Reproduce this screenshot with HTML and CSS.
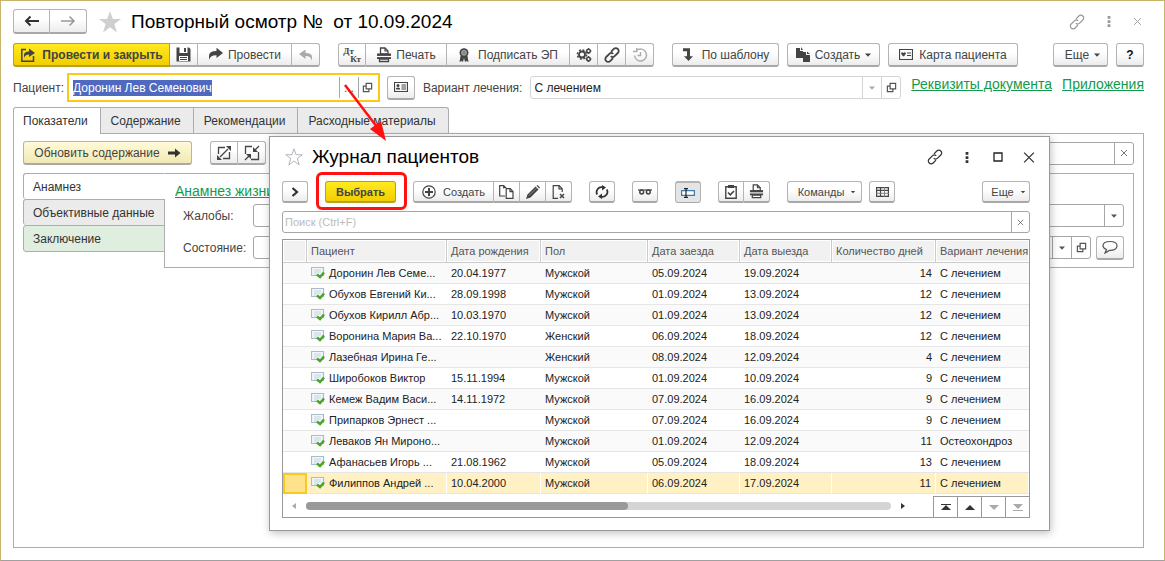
FILE: index.html
```html
<!DOCTYPE html>
<html lang="ru">
<head>
<meta charset="utf-8">
<title>Повторный осмотр</title>
<link rel="stylesheet" href="styles.css">
</head>
<body>
<svg class="defs" aria-hidden="true">
  <symbol id="i-link" viewBox="0 0 16 16"><g fill="none" stroke="currentColor"><path d="M7 4.800 9.800 2a2.700 2.700 0 0 1 4 0 2.700 2.700 0 0 1 0 4L10.600 9.200a2.700 2.700 0 0 1-3.800 0"/><path d="M9 11.200 6.200 14a2.700 2.700 0 0 1-4 0 2.700 2.700 0 0 1 0-4L5.400 6.800a2.700 2.700 0 0 1 3.800 0"/></g></symbol>
  <symbol id="i-print" viewBox="0 0 16 16"><path d="M4.500 1h4.500l3 3v3H4.500z" fill="#fff" stroke="currentColor" stroke-width="1.300"/><path d="M9 1v3h3" fill="none" stroke="currentColor"/><path d="M1 6.500h14V12H1z" fill="currentColor"/><path d="M1 9.500h14" stroke="#fff"/><path d="M3.500 12h9v2.500h-9z" fill="#fff" stroke="currentColor" stroke-width="1.300"/></symbol>
  <symbol id="i-open" viewBox="0 0 12 12"><g fill="none" stroke="currentColor" stroke-width="1.300"><path d="M4.500 1.500h6v6h-6z"/><path d="M4.500 4.500h-3v6h6v-3"/></g></symbol>
  <symbol id="i-down" viewBox="0 0 8 8"><path d="M1 2.500h6L4 5.800z" fill="currentColor"/></symbol>
  <symbol id="i-x" viewBox="0 0 12 12"><path d="M1.500 1.500l9 9M10.500 1.500l-9 9" stroke="currentColor" stroke-width="1.200"/></symbol>
  <symbol id="i-dots" viewBox="0 0 4 12"><path d="M.5 0h3v3h-3zM.5 4.500h3v3h-3zM.5 9h3v3h-3z" fill="currentColor"/></symbol>
  <symbol id="i-star" viewBox="0 0 24 24"><path d="M12 1l2.800 8H23l-6.600 5 2.500 8.500L12 17.300 5.100 22.500 7.600 14 1 9h8.200z"/></symbol>
  <symbol id="i-doc" viewBox="0 0 14 13"><path d="M.5 1.500h12v8h-12z" fill="#f3f7fa" stroke="#a9bccb"/><path d="M3 4h7M3 6h7M3 8h3" stroke="#c3d3de"/><path d="M6 8.500 9 11 13 6.500" fill="none" stroke="#4aa52a" stroke-width="2.600"/></symbol>
</svg>

<main class="window">
  <header class="titlebar">
    <div class="group">
      <button class="btn nav" aria-label="Назад"><svg width="16" height="12" viewBox="0 0 16 12"><path d="M2 6h13M6.500 1.500 2 6l4.500 4.500" fill="none" stroke="#333" stroke-width="2"/></svg></button>
      <button class="btn nav" aria-label="Вперед"><svg width="16" height="12" viewBox="0 0 16 12"><path d="M1 6h13M9.500 1.500 14 6l-4.500 4.500" fill="none" stroke="#999" stroke-width="1.500"/></svg></button>
    </div>
    <svg class="star filled" width="24" height="24"><use href="#i-star"/></svg>
    <h1>Повторный осмотр №&nbsp; от 10.09.2024</h1>
    <div class="window-tools">
      <svg width="16" height="16"><use href="#i-link"/></svg>
      <svg width="4" height="11"><use href="#i-dots"/></svg>
      <svg width="9" height="9"><use href="#i-x"/></svg>
    </div>
  </header>

  <div class="toolbar">
    <div class="group">
      <button class="btn primary save"><svg width="16" height="16" viewBox="0 0 16 16"><path d="M6 2.500H1.800v11.700h11.700V9" fill="none" stroke="#444" stroke-width="1.500"/><path d="M4 11V8q0-3.500 5-3.500V1.500l6 4.500-6 4V7.500Q5 7.500 4 11z" fill="#444"/></svg>Провести и закрыть</button>
      <button class="btn icon28" aria-label="Записать"><svg width="15" height="15" viewBox="0 0 15 15"><path d="M.5.500h3V6h8V.5h1.500L14.500 2v12.500H.5z" fill="#444"/><path d="M8 1h2v4H8z" fill="#444"/><path d="M3 9h9v5H3z" fill="#fff"/><path d="M4 10.500h7M4 12.500h7" stroke="#444"/></svg></button>
      <button class="btn post"><svg width="16" height="16" viewBox="0 0 16 16"><path d="M1 13V9q0-5 7.500-5V.8L15 6l-6.500 5V8.200Q2 8 1 13z" fill="#444"/></svg>Провести</button>
      <button class="btn icon28" aria-label="Отменить проведение"><svg width="16" height="16" viewBox="0 0 16 16"><path d="M14 14v-4q0-4-6.500-4V2.500L1 7l6.500 5V9Q13 9 14 14z" fill="#aaa"/></svg></button>
    </div>
    <div class="group">
      <button class="btn icon28 dtkt" aria-label="Дт/Кт"><span>Дт</span><span>Кт</span></button>
      <button class="btn print"><svg width="16" height="16"><use href="#i-print"/></svg>Печать</button>
      <button class="btn sign"><svg width="12" height="14" viewBox="0 0 12 14"><path d="M2.500 8 1.500 14l2-1 1.500 1 1-4 1 4 1.500-1 2 1L9.500 8z" fill="#444"/><circle cx="6" cy="4.800" r="4.500" fill="#444"/><circle cx="6" cy="4.800" r="2.500" fill="#888" stroke="#bbb" stroke-width=".7"/></svg>Подписать ЭП</button>
      <button class="btn icon28" aria-label="Настройки"><svg width="16" height="16" viewBox="0 0 16 16"><g fill="none" stroke="#444"><circle cx="6" cy="7.500" r="3" stroke-width="1.800"/><circle cx="6" cy="7.500" r="4.600" stroke-width="1.500" stroke-dasharray="2 1.600"/><circle cx="12.500" cy="4" r="1.800" stroke-width="1.500"/><circle cx="12.500" cy="12" r="1.800" stroke-width="1.500"/><path d="M12.500 1v1M12.500 6v1M9.600 4h1M14.500 4h1M12.500 9v1M12.500 14v1M9.600 12h1M14.500 12h1"/></g></svg></button>
      <button class="btn icon28" aria-label="Ссылка"><svg class="bold" width="16" height="16"><use href="#i-link"/></svg></button>
      <button class="btn icon28" aria-label="История"><svg width="16" height="16" viewBox="0 0 16 16"><path d="M2.500 8.500a6 6 0 1 0 2-5M1 4.500h3.800V1M8.500 5v3.500H5.500" fill="none" stroke="#aaa" stroke-width="1.400"/></svg></button>
    </div>
    <button class="btn template"><svg width="12" height="15" viewBox="0 0 12 15"><path d="M1 1.200h7v8h3L6.500 14 2 9.200h3v-5H1z" fill="#444"/></svg>По шаблону</button>
    <button class="btn create"><svg width="16" height="15" viewBox="0 0 16 15"><path d="M1 1h4v3h3v7H1zM6 0l2 3H6zM8 5h3v3h4v7H8z" fill="#444"/><path d="M12 4.500 15 7h-3z" fill="#444"/></svg>Создать<svg class="caret" width="8" height="8"><use href="#i-down"/></svg></button>
    <button class="btn card"><svg width="14" height="11" viewBox="0 0 14 11"><path d="M.5.500h13v10H.5z" fill="none" stroke="#444"/><path d="M2 4q1-1.500 2.500 0 1.500-1.500 2.500 0Q6.500 6 4.500 7.500 2.500 6 2 4z" fill="#444"/><path d="M8 4h4M8 6.500h4" stroke="#444"/></svg>Карта пациента</button>
    <button class="btn more">Еще<svg class="caret" width="8" height="8"><use href="#i-down"/></svg></button>
    <button class="btn icon28 help">?</button>
  </div>

  <div class="fields">
    <label for="patient">Пациент:</label>
    <div class="box patient">
      <input id="patient" value="Доронин Лев Семенович">
      <button aria-label="Выбрать пациента">...</button>
      <button aria-label="Открыть"><svg width="11" height="11"><use href="#i-open"/></svg></button>
    </div>
    <button class="btn icon28 patient-card" aria-label="Карточка"><svg width="14" height="10" viewBox="0 0 14 10"><path d="M.5.500h13v9H.5z" fill="none" stroke="#444"/><circle cx="4" cy="3.500" r="1.500" fill="#444"/><path d="M2 7.500V6.200q2-1.500 4 0v1.300z" fill="#444"/><path d="M7.500 3H12M7.500 5H12M7.500 7H12" stroke="#444"/></svg></button>
    <label for="variant">Вариант лечения:</label>
    <div class="box variant">
      <input id="variant" value="С лечением">
      <button class="dim" aria-label="Список"><svg width="8" height="8"><use href="#i-down"/></svg></button>
      <button aria-label="Открыть"><svg width="11" height="11"><use href="#i-open"/></svg></button>
    </div>
    <a href="#">Реквизиты документа</a>
    <a href="#">Приложения</a>
  </div>

  <nav class="tabs">
    <button class="active">Показатели</button><button>Содержание</button><button>Рекомендации</button><button>Расходные материалы</button>
  </nav>

  <section class="page">
    <div class="page-bar">
      <button class="btn refresh">Обновить содержание<svg width="13" height="10" viewBox="0 0 13 10"><path d="M0 3.500h7V.5L12.500 5 7 9.500v-3H0z" fill="#333"/></svg></button>
      <div class="group">
        <button class="btn icon28" aria-label="Развернуть"><svg width="16" height="16" viewBox="0 0 16 16"><path d="M9 2.500H2.500V9M7 13.500h6.500V7M4 12l8-8" fill="none" stroke="#444" stroke-width="1.300"/><path d="M15 1v5L10 1zM1 15v-5L6 15z" fill="#444"/></svg></button>
        <button class="btn icon28" aria-label="Свернуть"><svg width="16" height="16" viewBox="0 0 16 16"><path d="M8 1.500H1.500V9M7 14.500h7.500V7M1 15l4-4M15 1l-4 4" fill="none" stroke="#444" stroke-width="1.300"/><path d="M9 2v5h5zM7 14V9H2z" fill="#444"/></svg></button>
      </div>
      <div class="box filter"><input aria-label="Поиск"><button aria-label="Очистить"><svg width="8" height="8"><use href="#i-x"/></svg></button></div>
    </div>
    <div class="sheet">
      <nav class="side">
        <button class="active">Анамнез</button><button>Объективные данные</button><button class="green">Заключение</button>
      </nav>
      <div class="sheet-body">
        <a href="#">Анамнез жизни</a>
        <div class="line">
          <label for="complaints">Жалобы:</label>
          <div class="box"><input id="complaints"><button aria-label="Список"><svg width="8" height="8"><use href="#i-down"/></svg></button></div>
        </div>
        <div class="line">
          <label for="state">Состояние:</label>
          <div class="box"><input id="state"><button aria-label="Список"><svg width="8" height="8"><use href="#i-down"/></svg></button><button aria-label="Открыть"><svg width="11" height="11"><use href="#i-open"/></svg></button></div>
          <button class="btn icon28" aria-label="Комментарий"><svg width="16" height="14" viewBox="0 0 16 14"><path d="M4.500 9.500 3 13l4.500-2.600Q15 10.500 15 5.800 15 1.500 8 1.500T1 5.800q0 2.500 3.500 3.700z" fill="none" stroke="#555" stroke-width="1.200"/></svg></button>
        </div>
      </div>
    </div>
  </section>
</main>

<section class="dialog" role="dialog" aria-labelledby="dialog-title">
  <header class="dialog-title">
    <svg class="star" width="18" height="18"><use href="#i-star"/></svg>
    <h2 id="dialog-title">Журнал пациентов</h2>
    <div class="window-tools">
      <svg width="16" height="16"><use href="#i-link"/></svg>
      <svg width="14" height="11"><use href="#i-dots"/></svg>
      <svg width="14" height="10" viewBox="0 0 10 10"><path d="M1 1h8v8H1z" fill="none" stroke="#222" stroke-width="1.300"/></svg>
      <svg width="14" height="13"><use href="#i-x"/></svg>
    </div>
  </header>
  <div class="toolbar small">
    <button class="btn icon26" aria-label="Панель"><svg width="8" height="10" viewBox="0 0 8 10"><path d="M1.500 1 6 5 1.500 9" fill="none" stroke="#333" stroke-width="2.200"/></svg></button>
    <div class="choose"><button class="btn primary">Выбрать</button></div>
    <div class="group">
      <button class="btn add"><svg width="14" height="14" viewBox="0 0 14 14"><circle cx="7" cy="7" r="6.200" fill="none" stroke="#444" stroke-width="1.200"/><path d="M7 3v8M3 7h8" stroke="#444" stroke-width="2"/></svg>Создать</button>
      <button class="btn icon26" aria-label="Копировать"><svg width="15" height="14" viewBox="0 0 15 14"><path d="M6 11H.7V.7h4l2.500 2.500V4M4.700.7v2.800M7.200 3.700h4L14 6.500v6.800H7.200zM11 3.700v3h3" fill="#fff" stroke="#444" stroke-width="1.200"/></svg></button>
      <button class="btn icon26" aria-label="Изменить"><svg width="14" height="14" viewBox="0 0 14 14"><path d="M0 14 1.500 9.500 9.500 1.500 12.500 4.500 4.500 12.500z" fill="#444"/><path d="M10.500.8 11.500 0 14 2.500 13.200 3.500z" fill="#444"/><path d="M3 10.500 10.500 3" stroke="#aaa" stroke-width=".7"/></svg></button>
      <button class="btn icon26" aria-label="Удалить"><svg width="14" height="14" viewBox="0 0 14 14"><path d="M6 13.300H1.200V.7h6l3 3V7M7 .7v3.200h3.200" fill="none" stroke="#444" stroke-width="1.200"/><path d="M8 9l4 4M12 9l-4 4" stroke="#444" stroke-width="1.500"/></svg></button>
    </div>
    <button class="btn icon26" aria-label="Обновить"><svg width="14" height="14" viewBox="0 0 14 14"><path d="M2.200 9.500A5 5 0 0 1 7.500 2.200M11.800 4.500A5 5 0 0 1 6.500 11.800" fill="none" stroke="#333" stroke-width="1.800"/><path d="M7 0l4 2.500L7 5.500zM7 14l-4-2.500L7 8.500z" fill="#333"/></svg></button>
    <button class="btn icon26" aria-label="Просмотр"><svg width="14" height="8" viewBox="0 0 14 8"><path d="M0 2h14" stroke="#444" stroke-width="1.200"/><circle cx="3.700" cy="4" r="1.900" fill="none" stroke="#444" stroke-width="1.500"/><circle cx="10.300" cy="4" r="1.900" fill="none" stroke="#444" stroke-width="1.500"/></svg></button>
    <button class="btn icon26 pressed" aria-label="Поле ввода"><svg width="14" height="10" viewBox="0 0 14 10"><path d="M.6 2.600h12.800v4.800H.6z" fill="#fff" stroke="#3b7cae" stroke-width="1.200"/><path d="M5 0v10M3 .6h4M3 9.400h4" stroke="#222" stroke-width="1.200"/></svg></button>
    <div class="group">
      <button class="btn icon26" aria-label="Проверка"><svg width="12" height="14" viewBox="0 0 12 14"><path d="M.8 1.800h10.400v11.400H.8z" fill="#fff" stroke="#444" stroke-width="1.400"/><path d="M3 0h6v3H3z" fill="#444"/><path d="M3 7.500l2.300 2.300L9 6" fill="none" stroke="#444" stroke-width="1.600"/></svg></button>
      <button class="btn icon26" aria-label="Печать"><svg width="15" height="15"><use href="#i-print"/></svg></button>
    </div>
    <button class="btn commands">Команды<svg class="caret" width="6" height="6"><use href="#i-down"/></svg></button>
    <button class="btn icon26" aria-label="Таблица"><svg width="13" height="10" viewBox="0 0 13 10"><path d="M.6.600h11.800v8.800H.6z" fill="none" stroke="#444" stroke-width="1.200"/><path d="M0 3.300h13M4.500 0v10" stroke="#444" stroke-width="1.200"/><path d="M0 6.300h13M8.500 0v10" stroke="#777" stroke-width=".9"/></svg></button>
    <button class="btn more">Еще<svg class="caret" width="6" height="6"><use href="#i-down"/></svg></button>
  </div>
  <div class="box search"><input placeholder="Поиск (Ctrl+F)" aria-label="Поиск"><button aria-label="Очистить"><svg width="7" height="7"><use href="#i-x"/></svg></button></div>
  <div class="grid">
    <table>
      <colgroup><col class="c-mark"><col class="c-name"><col class="c-birth"><col class="c-sex"><col class="c-date"><col class="c-date"><col class="c-days"><col></colgroup>
      <thead><tr><th></th><th>Пациент</th><th>Дата рождения</th><th>Пол</th><th>Дата заезда</th><th>Дата выезда</th><th>Количество дней</th><th>Вариант лечения</th></tr></thead>
      <tbody>
        <tr><td></td><td><svg width="14" height="13"><use href="#i-doc"/></svg>Доронин Лев Семе...</td><td>20.04.1977</td><td>Мужской</td><td>05.09.2024</td><td>19.09.2024</td><td class="num">14</td><td>С лечением</td></tr>
        <tr><td></td><td><svg width="14" height="13"><use href="#i-doc"/></svg>Обухов Евгений Ки...</td><td>28.09.1998</td><td>Мужской</td><td>01.09.2024</td><td>13.09.2024</td><td class="num">12</td><td>С лечением</td></tr>
        <tr><td></td><td><svg width="14" height="13"><use href="#i-doc"/></svg>Обухов Кирилл Абр...</td><td>10.03.1970</td><td>Мужской</td><td>01.09.2024</td><td>13.09.2024</td><td class="num">12</td><td>С лечением</td></tr>
        <tr><td></td><td><svg width="14" height="13"><use href="#i-doc"/></svg>Воронина Мария Ва...</td><td>22.10.1970</td><td>Женский</td><td>06.09.2024</td><td>18.09.2024</td><td class="num">12</td><td>С лечением</td></tr>
        <tr><td></td><td><svg width="14" height="13"><use href="#i-doc"/></svg>Лазебная Ирина Ге...</td><td></td><td>Женский</td><td>08.09.2024</td><td>12.09.2024</td><td class="num">4</td><td>С лечением</td></tr>
        <tr><td></td><td><svg width="14" height="13"><use href="#i-doc"/></svg>Широбоков Виктор</td><td>15.11.1994</td><td>Мужской</td><td>01.09.2024</td><td>10.09.2024</td><td class="num">9</td><td>С лечением</td></tr>
        <tr><td></td><td><svg width="14" height="13"><use href="#i-doc"/></svg>Кемеж Вадим Васи...</td><td>14.11.1972</td><td>Мужской</td><td>07.09.2024</td><td>16.09.2024</td><td class="num">9</td><td>С лечением</td></tr>
        <tr><td></td><td><svg width="14" height="13"><use href="#i-doc"/></svg>Припарков Эрнест ...</td><td></td><td>Мужской</td><td>07.09.2024</td><td>16.09.2024</td><td class="num">9</td><td>С лечением</td></tr>
        <tr><td></td><td><svg width="14" height="13"><use href="#i-doc"/></svg>Леваков Ян Мироно...</td><td></td><td>Мужской</td><td>01.09.2024</td><td>12.09.2024</td><td class="num">11</td><td>Остеохондроз</td></tr>
        <tr><td></td><td><svg width="14" height="13"><use href="#i-doc"/></svg>Афанасьев Игорь ...</td><td>21.08.1962</td><td>Мужской</td><td>05.09.2024</td><td>18.09.2024</td><td class="num">13</td><td>С лечением</td></tr>
        <tr class="current"><td></td><td><svg width="14" height="13"><use href="#i-doc"/></svg>Филиппов Андрей ...</td><td>10.04.2000</td><td>Мужской</td><td>06.09.2024</td><td>17.09.2024</td><td class="num">11</td><td>С лечением</td></tr>
      </tbody>
    </table>
    <div class="grid-foot">
      <svg width="4" height="6" viewBox="0 0 4 6"><path d="M4 0v6L0 3z" fill="#aaa"/></svg>
      <div class="track"><div class="thumb"></div></div>
      <svg width="4" height="6" viewBox="0 0 4 6"><path d="M0 0v6l4-3z" fill="#333"/></svg>
      <div class="jump">
        <button aria-label="В начало"><svg width="10" height="7" viewBox="0 0 10 7"><path d="M0 0h10v1H0zM5 1l5 5H0z" fill="#333"/></svg></button>
        <button aria-label="Вверх"><svg width="10" height="7" viewBox="0 0 10 7"><path d="M5 1l5 5H0z" fill="#333"/></svg></button>
        <button aria-label="Вниз"><svg width="10" height="7" viewBox="0 0 10 7"><path d="M0 1h10L5 6z" fill="#aaa"/></svg></button>
        <button aria-label="В конец"><svg width="10" height="7" viewBox="0 0 10 7"><path d="M0 0h10L5 5zM0 6h10v1H0z" fill="#aaa"/></svg></button>
      </div>
    </div>
  </div>
</section>

<svg class="pointer" width="46" height="62" viewBox="0 0 46 62" aria-hidden="true"><path d="M2 2l32 42" stroke="#f11" stroke-width="2.500"/><path d="M43 58 38 38 27 46z" fill="#f11"/></svg>
<script src="main.js"></script>
</body>
</html>
```
FILE: main.js
```js
const patient = document.getElementById("patient");
patient.focus();
patient.select();
```
FILE: styles.css
```css
* { box-sizing: border-box; }
body { margin: 0; background: #fff; color: #333; font: 12px/16px "Liberation Sans", Arial, sans-serif; }
button, input { font: inherit; color: inherit; margin: 0; padding: 0; border: 0; background: none; outline: 0; border-radius: 0; }
svg { display: block; flex: none; stroke-width: 1.200; }
h1, h2 { margin: 0; color: #000; font-weight: 400; font-size: 19px; line-height: 24px; white-space: pre; }
a { color: #149a4c; text-decoration: underline; font-size: 14px; white-space: nowrap; }
label { color: #444; white-space: nowrap; }
.defs { position: absolute; width: 0; height: 0; }

.window { min-height: 100vh; border: 1px solid #c6b56a; border-bottom-color: #a0a0a0; padding: 8px 20px 12px 12px; display: flex; flex-direction: column; }

.btn { display: flex; align-items: center; justify-content: center; height: 24px; border: 1px solid #b4b4b4; border-bottom: 2px solid #a8a8a8; border-radius: 3px; background: linear-gradient(#fff 40%, #ececec); color: #444; white-space: nowrap; }
.group { display: flex; }
.group .btn + .btn { border-left: 0; }
.group .btn:not(:first-child) { border-top-left-radius: 0; border-bottom-left-radius: 0; }
.group .btn:not(:last-child) { border-top-right-radius: 0; border-bottom-right-radius: 0; }
.btn.primary { background: linear-gradient(#ffea20, #f2ce00); border-color: #b8a020; color: #444; font-weight: 700; }
.icon28 { width: 28px; }
.icon26 { width: 26px; }

.titlebar { display: flex; align-items: center; height: 25px; }
.nav { width: 37px; height: 25px; }
.star { margin-left: 11px; fill: none; stroke: #a8acb4; }
.star.filled { fill: #cfcfcf; stroke: none; }
h1 { margin-left: 9px; }
.window-tools { margin-left: auto; display: flex; align-items: center; color: #999; }
.titlebar .window-tools { gap: 22px; padding-right: 2px; }

.toolbar { display: flex; margin-top: 9px; }
.save { width: 157px; gap: 6px; }
.post { width: 94px; gap: 4px; }
.toolbar .group + .group { margin-left: 18px; }
.dtkt { flex-direction: column; font: 700 9px/8px "Liberation Serif", serif; }
.dtkt span:first-child { padding-right: 7px; }
.dtkt span:last-child { padding-left: 7px; }
.print { width: 81px; gap: 4px; }
.sign { width: 123px; gap: 8px; }
.bold { stroke-width: 1.800; }
.template { width: 107px; gap: 8px; margin-left: 18px; }
.create { width: 93px; gap: 4px; margin-left: 8px; }
.card { width: 130px; gap: 6px; margin-left: 8px; }
.more { width: 55px; gap: 4px; padding-left: 5px; margin-left: auto; }
.help { margin-left: 8px; font-weight: 700; color: #111; }

.fields { display: flex; align-items: center; margin-top: 6px; height: 29px; }
.box { display: flex; border: 1px solid #a6a6a6; border-radius: 3px; height: 23px; background: #fff; min-width: 0; }
.box input { flex: 1; min-width: 0; padding: 0 3px; color: #222; }
.box button { width: 19px; border-left: 1px solid #a6a6a6; display: flex; align-items: center; justify-content: center; color: #555; }
.patient { flex: 1 1 313px; margin-left: 3px; height: 29px; border: 2px solid #fcc81c; border-radius: 0; padding: 2px 1px; }
.patient input::selection { background: #4f69c0; color: #fff; }
.patient-card { margin: 0 8px 0 7px; }
.variant { flex: 1 1 371px; margin-left: 8px; border-color: #d4d4d4; }
.variant button { border-color: #d4d4d4; }
.variant .dim { color: #aaa; }
.fields a { margin-left: 10px; padding-bottom: 7px; }

.tabs { display: flex; margin-top: 5px; position: relative; z-index: 1; }
.tabs button { height: 26px; padding: 0 12px 0 10px; border: 1px solid #adadad; border-left: 0; border-bottom: 0; background: #ebebeb; color: #333; }
.tabs button:last-child { border-top-right-radius: 3px; }
.tabs button.active { padding-left: 9px; border-left: 1px solid #adadad; border-radius: 3px 0 0 0; background: #fff; margin-bottom: -1px; height: 27px; }
.page { flex: 1; border: 1px solid #adadad; padding: 7px 9px; }
.page-bar { display: flex; align-items: center; gap: 18px; }
.refresh { width: 169px; gap: 8px; background: linear-gradient(#fffbd8, #f1e8b4); }
.filter { flex: 1; }
.sheet { display: flex; margin-top: 8px; }
.side { width: 142px; margin-right: -1px; position: relative; display: flex; flex-direction: column; }
.side button { height: 26px; border: 1px solid #adadad; border-bottom: 0; border-radius: 3px 0 0 3px; background: #ebebeb; text-align: left; padding-left: 9px; color: #333; white-space: nowrap; }
.side button.active { background: #fff; border-right-color: #fff; }
.side button.green { background: #e0eee0; height: 27px; border-bottom: 1px solid #adadad; }
.sheet-body { flex: 1; border: 1px solid #adadad; padding: 9px 9px 8px 10px; }
.line { display: flex; align-items: center; margin-top: 4px; padding-left: 8px; height: 23px; }
.line + .line { margin-top: 9px; }
.line label { width: 70px; }
.line .box { flex: 1; }
.line .icon28 { margin-left: 5px; }

.dialog { position: absolute; left: 269px; right: 115px; top: 136px; border: 1px solid #999; background: #fff; box-shadow: 1px 2px 8px rgba(0, 0, 0, .25); padding: 8px 19px 12px 12px; font-size: 11px; line-height: 14px; z-index: 2; }
.dialog-title { display: flex; align-items: center; height: 24px; }
.dialog-title .star { margin-left: 3px; }
h2 { margin-left: 9px; }
.dialog .window-tools { gap: 17px; color: #333; margin-right: -6px; }
.small { margin-top: 12px; height: 22px; }
.small .btn { height: 22px; }
.small .btn.primary { width: 71px; }
.choose { position: relative; margin: 0 17px; }
.choose::after { content: ""; position: absolute; inset: -9px -11px -7px -9px; border: 3px solid #f11; border-radius: 6px; pointer-events: none; }
.add { width: 81px; gap: 7px; }
.small > .icon26 + .icon26, .small > .group + .icon26, .small > .icon26 + .group { margin-left: 17px; }
.pressed.btn { background: #e4e4e4; border-bottom-width: 1px; border-top-width: 2px; }
.commands { width: 75px; margin-left: 17px; gap: 6px; padding-left: 5px; }
.commands + .icon26 { margin-left: 7px; }
.small .more { width: 48px; gap: 6px; }
.search { margin-top: 8px; height: 22px; }
.search input { padding: 0 2px; }
.search input::placeholder { color: #bbb; opacity: 1; }
.search button { width: 18px; }

.grid { margin-top: 6px; border: 1px solid #999; }
table { width: 100%; table-layout: fixed; border-collapse: separate; border-spacing: 0; }
.c-mark { width: 24px; }
.c-name { width: 140px; }
.c-birth { width: 94px; }
.c-sex { width: 107px; }
.c-date { width: 92px; }
.c-days { width: 104px; }
th, td { padding: 0 4px; text-align: left; font-weight: 400; white-space: nowrap; overflow: hidden; }
th { height: 23px; background: #f1f1f1; border-right: 1px solid #ccc; border-bottom: 1px solid #ccc; box-shadow: inset 0 0 0 1px #fff; color: #555; }
td { height: 21px; border-bottom: 1px solid #e6e6e6; color: #222; }
th:last-child { border-right: 0; }
tbody tr:nth-child(odd) { background: #fafafa; }
td svg { float: left; margin-right: 4px; }
.num { text-align: right; }
tbody tr.current td { background: #fff1c4; border-right: 1px solid #fff; }
tbody tr.current td:first-child { background: #ffe38c; border: 2px solid #fcc81c; }
.grid-foot { display: flex; align-items: center; height: 23px; padding-left: 9px; }
.track { flex: 1; margin: 0 10px; height: 8px; border-radius: 4px; background: #d4d4d4; }
.thumb { width: 55%; height: 8px; border-radius: 4px; background: #999; }
.jump { display: flex; align-self: flex-end; margin-left: 28px; border-top: 1px solid #999; }
.jump button { width: 24px; height: 20px; border-left: 1px solid #999; display: flex; align-items: center; justify-content: center; }

.pointer { position: absolute; left: 343px; top: 83px; z-index: 3; }
```
